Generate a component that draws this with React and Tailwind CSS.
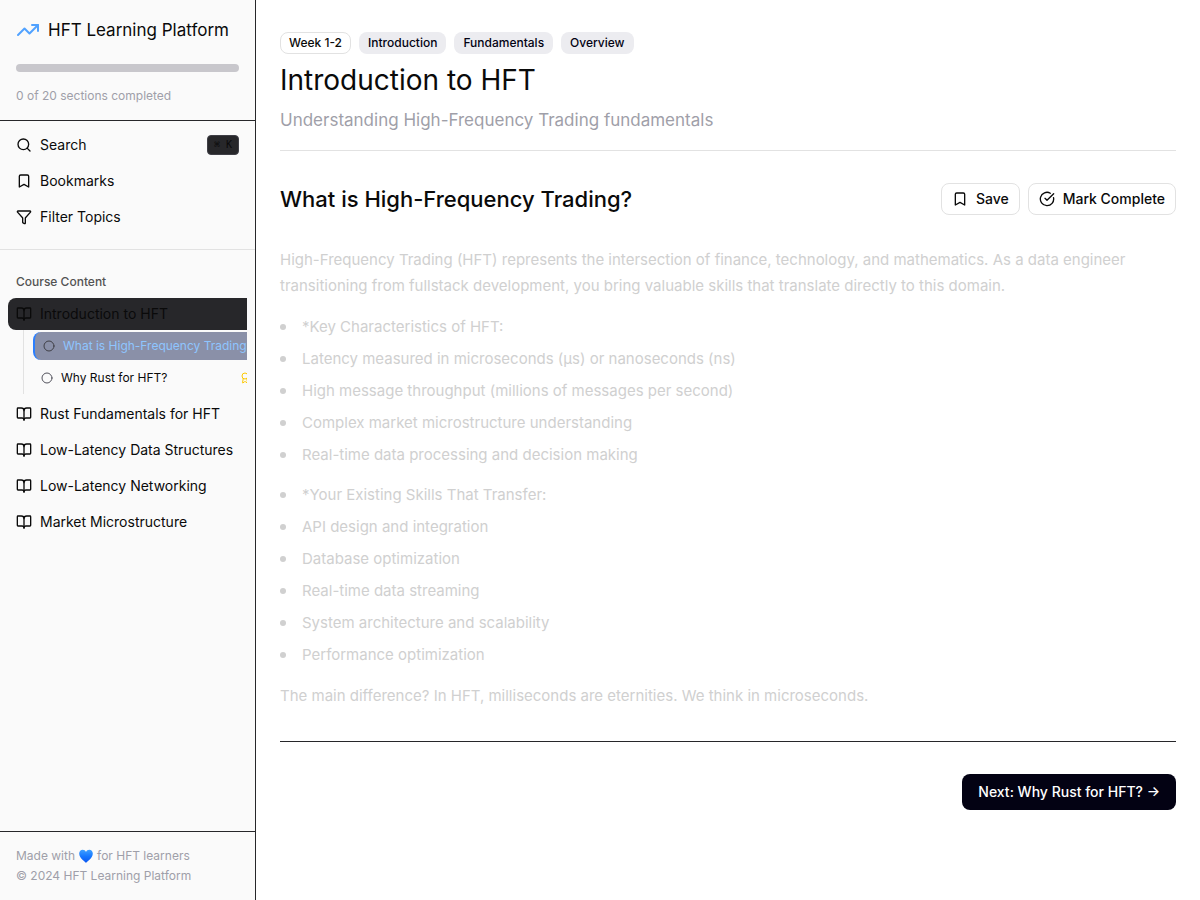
import {
  TrendingUp,
  Search,
  Bookmark,
  Funnel,
  BookOpen,
  Circle,
  CircleCheckBig,
  Award,
} from "lucide-react";

const chapters = [
  "Rust Fundamentals for HFT",
  "Low-Latency Data Structures",
  "Low-Latency Networking",
  "Market Microstructure",
];

const characteristics = [
  "*Key Characteristics of HFT:",
  "Latency measured in microseconds (μs) or nanoseconds (ns)",
  "High message throughput (millions of messages per second)",
  "Complex market microstructure understanding",
  "Real-time data processing and decision making",
];

const skills = [
  "*Your Existing Skills That Transfer:",
  "API design and integration",
  "Database optimization",
  "Real-time data streaming",
  "System architecture and scalability",
  "Performance optimization",
];

function BlueHeart() {
  return (
    <svg
      viewBox="0 0 16 16"
      className="w-4 h-4"
      role="img"
      aria-label="blue heart"
    >
      <defs>
        <linearGradient id="heart" x1="0" y1="0" x2="0" y2="1">
          <stop offset="0" stopColor="#3fa0ff" />
          <stop offset="0.5" stopColor="#1677ff" />
          <stop offset="1" stopColor="#0a55f0" />
        </linearGradient>
      </defs>
      <path
        fill="url(#heart)"
        d="M8 15C7 13.6 1.2 10.2 1.2 5.6C1.2 3.3 2.8 1.8 4.7 1.8C6.2 1.8 7.4 2.7 8 4C8.6 2.7 9.8 1.8 11.3 1.8C13.2 1.8 14.8 3.3 14.8 5.6C14.8 10.2 9 13.6 8 15Z"
      />
    </svg>
  );
}

function BulletList({ items }) {
  return (
    <ul className="flex flex-col gap-1.5">
      {items.map((item) => (
        <li key={item} className="flex items-center gap-4">
          <span className="w-1.5 h-1.5 shrink-0 rounded-full bg-[#d0d0d0]"></span>
          {item}
        </li>
      ))}
    </ul>
  );
}

function Sidebar() {
  return (
    <aside className="w-64 shrink-0 flex flex-col bg-[#fafafa] border-r border-[#27272a]">
      <div className="p-4 border-b border-[#27272a]">
        <div className="flex items-center gap-2">
          <TrendingUp className="w-6 h-6 text-[#51a2ff]" />
          <h2 className="text-[17px] leading-7 whitespace-nowrap">
            HFT Learning Platform
          </h2>
        </div>
        <div
          role="progressbar"
          aria-label="Course progress"
          aria-valuenow={0}
          className="mt-5 h-2 rounded-full bg-[#c8c7cc]"
        ></div>
        <p className="mt-4 text-xs text-[#9f9fa9]">
          0 of 20 sections completed
        </p>
      </div>

      {/* Tools */}
      <div className="p-2 pb-4 flex flex-col gap-1 border-b border-[#e2e2e2] text-sm">
        <button className="h-8 px-2 flex items-center gap-2 rounded-md">
          <Search className="w-4 h-4" />
          Search
          <kbd className="ml-auto h-5 px-1.5 flex items-center rounded-sm border border-[#3f3f46] bg-[#27272a] font-['DejaVu_Sans_Mono',monospace] text-[10px] leading-none">
            ⌘ K
          </kbd>
        </button>
        <button className="h-8 px-2 flex items-center gap-2 rounded-md">
          <Bookmark className="w-4 h-4" />
          Bookmarks
        </button>
        <button className="h-8 px-2 flex items-center gap-2 rounded-md">
          <Funnel className="w-4 h-4" />
          Filter Topics
        </button>
      </div>

      {/* Course tree */}
      <nav className="flex-1 mt-4 mx-2 overflow-hidden text-sm">
        <h3 className="h-8 px-2 flex items-center text-xs font-medium text-[#535353]">
          Course Content
        </h3>
        <button className="w-full h-8 px-2 flex items-center gap-2 rounded-l-lg bg-[#27272a]">
          <BookOpen className="w-4 h-4" />
          Introduction to HFT
        </button>
        <ul className="ml-[15px] -mr-8 pl-[9px] py-0.5 flex flex-col gap-1 border-l border-[#e2e2e2] text-xs">
          <li>
            <a
              href="#what-is-hft"
              className="h-7 px-2 flex items-center gap-2 rounded-lg border-l-2 border-[#2b7fff] bg-[#8a90a8] text-[#8ec5ff] whitespace-nowrap"
            >
              <Circle className="w-3 h-3 shrink-0 text-[#3f3f46]" />
              What is High-Frequency Trading?
            </a>
          </li>
          <li>
            <a
              href="#why-rust"
              className="h-7 px-2 flex items-center gap-2 rounded-md"
            >
              <Circle className="w-3 h-3 shrink-0 text-[#52525c]" />
              Why Rust for HFT?
              <Award className="ml-auto mr-5 w-3 h-3 text-[#fcc800]" />
            </a>
          </li>
        </ul>
        <ul className="mt-1 flex flex-col gap-1">
          {chapters.map((title) => (
            <li key={title}>
              <button className="w-full h-8 px-2 flex items-center gap-2 rounded-md whitespace-nowrap">
                <BookOpen className="w-4 h-4 shrink-0" />
                {title}
              </button>
            </li>
          ))}
        </ul>
      </nav>

      <div className="p-4 flex flex-col gap-1 border-t border-[#27272a] text-xs text-[#9f9fa9]">
        <p className="flex items-center gap-[3px]">
          Made with <BlueHeart /> for HFT learners
        </p>
        <p>© 2024 HFT Learning Platform</p>
      </div>
    </aside>
  );
}

export default function App() {
  return (
    <div className="min-h-screen flex bg-white text-[#0a0a0a] font-['Inter',sans-serif]">
      <Sidebar />

      <main className="flex-1 min-w-0 px-6 py-8">
        <header className="pb-4 border-b border-[#e2e2e2]">
          <div className="flex flex-wrap gap-2 text-xs font-medium">
            <span className="px-2 py-0.5 rounded-lg border border-[#e2e2e2]">
              Week 1-2
            </span>
            {["Introduction", "Fundamentals", "Overview"].map((tag) => (
              <span
                key={tag}
                className="px-2 py-0.5 rounded-lg border border-transparent bg-[#ececf0] text-[#030213]"
              >
                {tag}
              </span>
            ))}
          </div>
          <h1 className="mt-2 text-[28px] leading-9">Introduction to HFT</h1>
          <p className="mt-2 text-[17px] leading-7 text-[#9f9fa9]">
            Understanding High-Frequency Trading fundamentals
          </p>
        </header>

        <section className="mt-8">
          <div className="flex items-center justify-between">
            <h2 className="text-[22px] leading-8 font-medium">
              What is High-Frequency Trading?
            </h2>
            <div className="flex gap-2 text-sm font-medium">
              <button className="h-8 px-2.5 flex items-center gap-2 rounded-lg border border-[#e2e2e2]">
                <Bookmark className="w-4 h-4" />
                Save
              </button>
              <button className="h-8 px-2.5 flex items-center gap-2 rounded-lg border border-[#e2e2e2]">
                <CircleCheckBig className="w-4 h-4" />
                Mark Complete
              </button>
            </div>
          </div>

          <div className="mt-8 text-[15px] leading-[26px] text-[#d0d0d0]">
            <p>
              High-Frequency Trading (HFT) represents the intersection of
              finance, technology, and mathematics. As a data engineer
              transitioning from fullstack development, you bring valuable
              skills that translate directly to this domain.
            </p>
            <div className="my-[15px] flex flex-col gap-3.5">
              <BulletList items={characteristics} />
              <BulletList items={skills} />
            </div>
            <p>
              The main difference? In HFT, milliseconds are eternities. We think
              in microseconds.
            </p>
          </div>
        </section>

        <footer className="mt-8 pt-8 flex justify-end border-t border-[#27272a]">
          <button className="h-9 px-4 rounded-lg bg-[#030213] text-sm font-medium text-white">
            Next: Why Rust for HFT? →
          </button>
        </footer>
      </main>
    </div>
  );
}
